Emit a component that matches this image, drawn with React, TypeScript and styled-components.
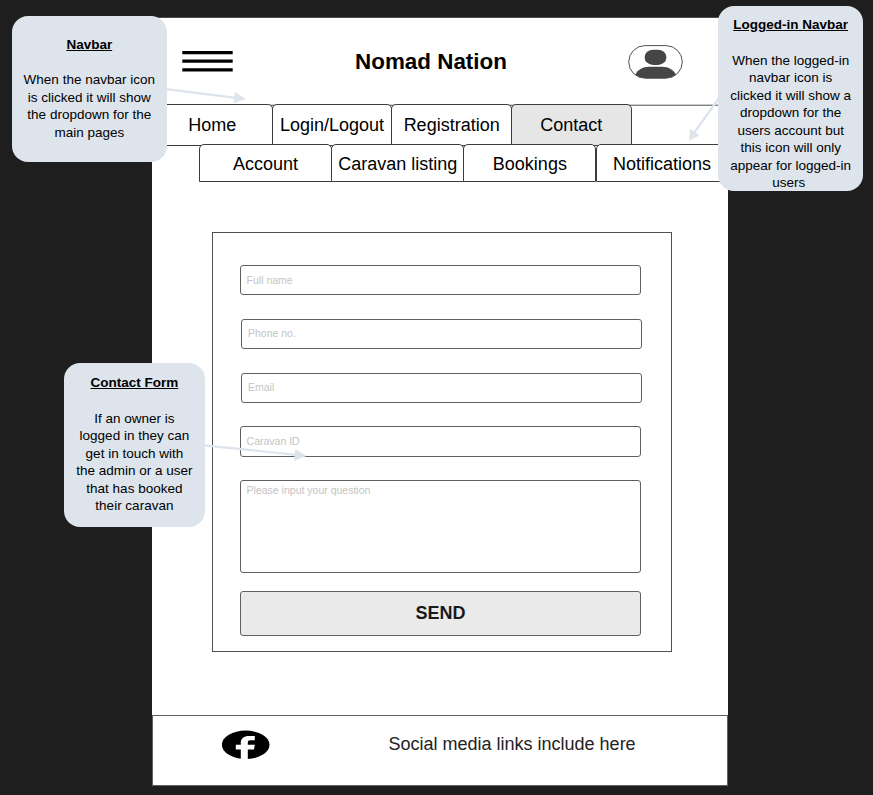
import React from "react";
import styled, { createGlobalStyle } from "styled-components";

const ink = "#3c3c3c";
const mist = "#dde4ec";

const GlobalStyle = createGlobalStyle`
  *, *::before, *::after { box-sizing: border-box; }
  body {
    margin: 0;
    background: #1e1e1e;
    font-family: "Liberation Sans", Arial, sans-serif;
    color: #000;
  }
`;

const Board = styled.main`
  position: relative;
  width: 873px;
  height: 795px;
  padding: 18px 0 0 152px;
  overflow: hidden;
  background: #1e1e1e;
`;

const Page = styled.div`
  display: flex;
  flex-direction: column;
  width: 576px;
  height: 768px;
  background: #fff;
  box-shadow: 0 -1px 0 #4d4d4d;
`;

const Header = styled.header`
  display: grid;
  grid-template-columns: 30px 51px 1fr 55px 45px;
  align-items: center;
  height: 86px;
`;

const Burger = styled.svg`
  grid-column: 2;
  width: 51px;
  height: 22px;
`;

const Brand = styled.h1`
  margin: 0 0 0 1px;
  padding-top: 1px;
  font-size: 22.4px;
  line-height: 26px;
  text-align: center;
`;

const Avatar = styled.svg`
  width: 56px;
  height: 35px;
  margin-top: 2px;
`;

const MainTabs = styled.nav`
  display: flex;
  height: 42px;
  box-shadow: inset 0 -1px 0 ${ink}, inset 0 1px 0 #cccccc, inset 0 2px 0 #808080;
`;

const SubTabs = styled.nav`
  display: grid;
  grid-template-columns: repeat(4, 132.2px);
  height: 38px;
  margin: -2px 0 0 47px;
  overflow: hidden;
`;

const Tab = styled.div<{ $active?: boolean }>`
  border: 1px solid ${ink};
  border-radius: 5px 5px 0 0;
  background: ${(p) => (p.$active ? "#e6e6e6" : "#fff")};
  font-size: 18px;
  text-align: center;
  white-space: nowrap;
`;

const MainTab = styled(Tab)`
  flex: none;
  width: 120.5px;
  height: 42px;
  margin-right: -0.8px;
  line-height: 40px;
`;

const SubTab = styled(Tab)`
  width: 133px;
  height: 38px;
  line-height: 38px;
`;

const ContactForm = styled.section`
  display: flex;
  flex-direction: column;
  width: 460px;
  height: 420px;
  margin: 50px 0 0 60px;
  padding: 32px 0 0 27px;
  border: 1px solid #505050;
`;

const Field = styled.div<{ $shift?: boolean; $h?: number; $gap?: number; $line?: number }>`
  flex: none;
  width: 401px;
  height: ${(p) => p.$h ?? 30}px;
  margin: 0 0 ${(p) => p.$gap ?? 24}px ${(p) => (p.$shift ? 1.4 : 0)}px;
  padding-left: 5.6px;
  border: 1px solid #606060;
  border-radius: 3px;
  color: #c4c4c4;
  font-size: 10.5px;
  line-height: ${(p) => p.$line ?? 28}px;
`;

const SendButton = styled.button`
  width: 401px;
  height: 45px;
  padding: 0 0 1px;
  border: 1px solid #606060;
  border-radius: 3px;
  background: #eaeaea;
  color: #1a1a1a;
  font: bold 18px/42px "Liberation Sans", Arial, sans-serif;
`;

const Footer = styled.footer`
  display: flex;
  align-items: flex-start;
  height: 71px;
  margin-top: auto;
  padding-left: 69px;
  border: 1px solid #606060;
  color: #222;
`;

const Facebook = styled.svg`
  width: 48px;
  height: 30px;
  margin-top: 14px;
`;

const FooterText = styled.span`
  margin: 18px 0 0 118.5px;
  font-size: 18px;
  line-height: 21px;
`;

const Callout = styled.aside<{ $x: number; $y: number; $w: number; $h: number; $pad: number }>`
  position: absolute;
  left: ${(p) => p.$x}px;
  top: ${(p) => p.$y}px;
  width: ${(p) => p.$w}px;
  height: ${(p) => p.$h}px;
  padding-top: ${(p) => p.$pad}px;
  border-radius: 16px;
  background: ${mist};
  font-size: 13.5px;
  line-height: 17.5px;
  text-align: center;
  white-space: nowrap;
`;

const CalloutTitle = styled.h2`
  margin: 0 0 18px;
  font-size: 13.5px;
  line-height: 17.5px;
  text-decoration: underline;
`;

const Line = styled.div`
  white-space: pre;
`;

const Arrows = styled.svg`
  position: absolute;
  left: 0;
  top: 0;
  width: 873px;
  height: 795px;
  pointer-events: none;
`;

type Note = { title: string; lines: string[]; x: number; y: number; w: number; h: number; pad: number };

const notes: Note[] = [
  {
    title: "Navbar",
    lines: ["When the navbar icon", "is clicked it will show", "the dropdown for the", "main pages"],
    x: 11.6, y: 16.2, w: 155.4, h: 145.6, pad: 19.5,
  },
  {
    title: "Logged-in Navbar",
    lines: [
      "When the logged-in", "navbar icon is", "clicked it will show a", "dropdown for the",
      "users account but", "this icon will only", "appear for logged-in", "users ",
    ],
    x: 718.4, y: 5.6, w: 144.6, h: 185.4, pad: 10.6,
  },
  {
    title: "Contact Form",
    lines: ["If an owner is", "logged in they can", "get in touch with", "the admin or a user", "that has booked", "their caravan"],
    x: 63.8, y: 363, w: 141.2, h: 164.2, pad: 11.4,
  },
];

export default function App() {
  return (
    <>
      <GlobalStyle />
      <Board>
        <Page>
          <Header>
            <Burger viewBox="0 0 51 22">
              <path d="M.3 2.6H50.7M.3 11.2H50.7M.3 19.8H50.7" stroke="#000" strokeWidth="3.3" />
            </Burger>
            <Brand>Nomad Nation</Brand>
            <Avatar viewBox="0 0 56 35">
              <rect x="0.7" y="0.6" width="53.6" height="32.6" rx="16.4" fill="#fff" stroke="#505050" />
              <rect x="16.7" y="4.7" width="21.6" height="15.2" rx="8.5" ry="7" fill="#464646" />
              <path d="M7.3 30C9 25 15 21.800 21 21.800H34C40.500 21.800 46 25 48 30Q43 33.200 37.500 33.200H17.500Q12 33.200 7.300 30Z" fill="#464646" />
            </Avatar>
          </Header>
          <MainTabs>
            <MainTab>Home</MainTab>
            <MainTab>Login/Logout</MainTab>
            <MainTab>Registration</MainTab>
            <MainTab $active>Contact</MainTab>
          </MainTabs>
          <SubTabs>
            <SubTab>Account</SubTab>
            <SubTab>Caravan listing</SubTab>
            <SubTab>Bookings</SubTab>
            <SubTab>Notifications</SubTab>
          </SubTabs>
          <ContactForm>
            <Field $line={29}>Full name</Field>
            <Field $shift $line={27}>Phone no.</Field>
            <Field $shift $line={27} $gap={23}>Email</Field>
            <Field $h={31} $gap={23} $line={29}>Caravan ID</Field>
            <Field $h={93} $gap={18} $line={18}>Please input your question</Field>
            <SendButton>SEND</SendButton>
          </ContactForm>
          <Footer>
            <Facebook viewBox="0 0 48 30">
              <ellipse cx="23.7" cy="14.8" rx="23.8" ry="14.2" fill="#000" />
              <path d="M18.800 30V19.500H13.800V14.700H18.800V12.500C18.800 8.500 22 6 27 6H32.800V10.300H28.500C26.500 10.300 25.800 11 25.800 12.300V14.700H32.800L32 19.500H25.800V30Z" fill="#fff" />
            </Facebook>
            <FooterText>Social media links include here</FooterText>
          </Footer>
        </Page>
        <Arrows viewBox="0 0 873 795" fill={mist} stroke={mist}>
          <path d="M166 89.200L236 97.800M719 98L694 133M204 445.400L296 454.800" strokeWidth="2.200" />
          <path d="M235 92L246 99L233.500 103.200ZM689 140.700L690 128.800L699.700 135.300ZM295.300 449L306.500 456L294 461Z" stroke="none" />
        </Arrows>
        {notes.map((n) => (
          <Callout key={n.title} $x={n.x} $y={n.y} $w={n.w} $h={n.h} $pad={n.pad}>
            <CalloutTitle>{n.title}</CalloutTitle>
            {n.lines.map((line) => (
              <Line key={line}>{line}</Line>
            ))}
          </Callout>
        ))}
      </Board>
    </>
  );
}
